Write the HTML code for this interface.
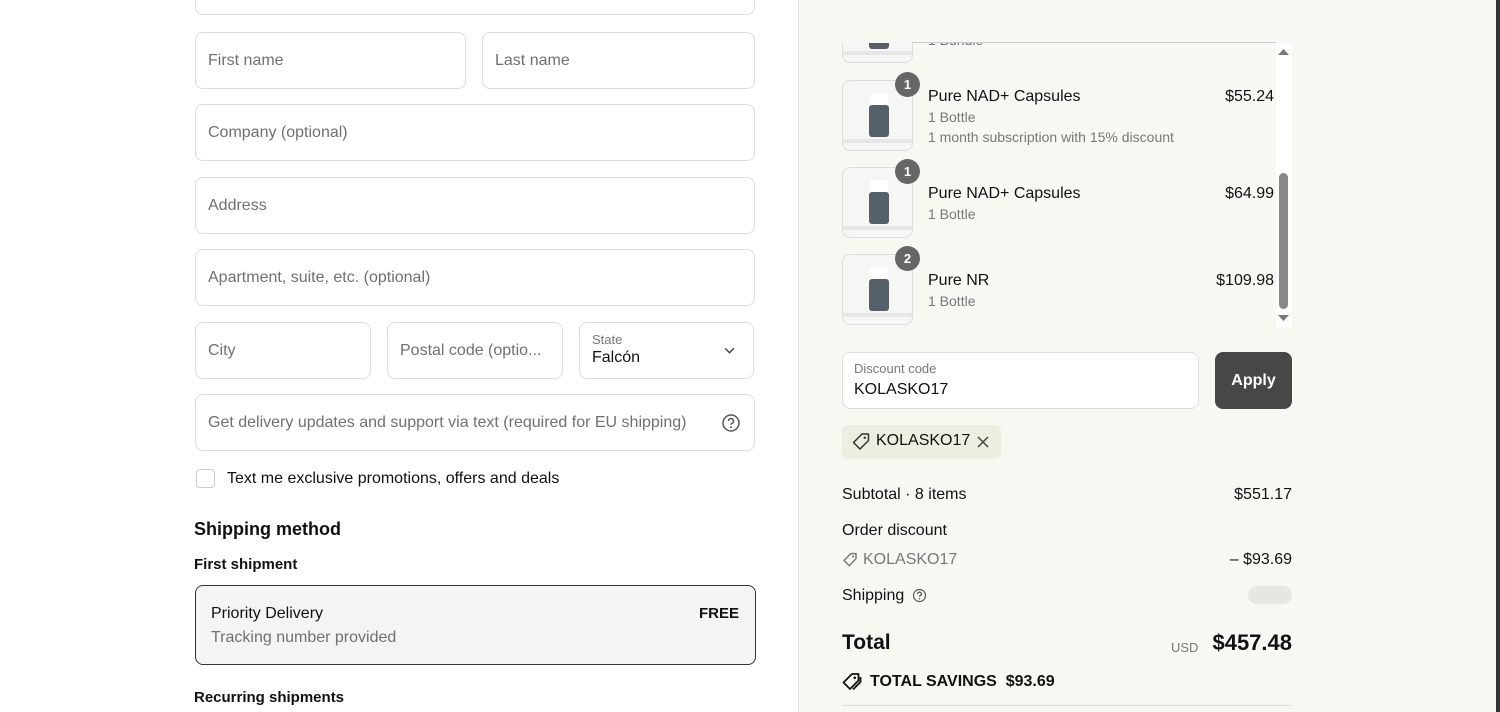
<!DOCTYPE html><html><head><style>
*{box-sizing:border-box;margin:0;padding:0}
body{width:1500px;height:712px;overflow:hidden;font-family:"Liberation Sans",sans-serif;background:#fff;position:relative;color:#111}
.a{position:absolute}
.in{position:absolute;border:1px solid #dcdcdc;border-radius:8px;background:#fff;height:57px;font-size:16px;color:#707070;padding:0 12px;display:flex;align-items:center}
.r{position:absolute;left:798px;top:0;width:698px;height:712px;background:#f8f8f3;border-left:1px solid #e4e4e0}
.img{position:absolute;left:842px;width:71px;height:71px;border:1px solid #ddd;border-radius:8px;background:#f6f6f5;overflow:hidden}
.img .b{position:absolute;left:26px;top:24px;width:20px;height:32px;background:#56606a;border-radius:3px}
.img .c{position:absolute;left:27px;top:12px;width:18px;height:13px;background:#fff;border-radius:3px}
.img .f{position:absolute;left:0;top:58px;width:71px;height:4px;background:#e6e6e6}
.bd{position:absolute;left:895px;width:25px;height:25px;border-radius:50%;background:#666;color:#fff;font-size:13px;font-weight:bold;text-align:center;line-height:25px}
.t{position:absolute;left:928px;font-size:16px;color:#111}
.s{position:absolute;left:928px;font-size:14px;color:#777}
.p{position:absolute;right:226px;font-size:16px}
</style></head><body>
<div class="in" style="left:195px;top:-42px;width:560px"></div>
<div class="a" style="left:208px;top:-13px;font-size:16px">Venezuela</div>
<div class="in" style="left:195px;top:32px;width:271px">First name</div>
<div class="in" style="left:482px;top:32px;width:273px">Last name</div>
<div class="in" style="left:195px;top:104px;width:560px">Company (optional)</div>
<div class="in" style="left:195px;top:177px;width:560px">Address</div>
<div class="in" style="left:195px;top:249px;width:560px">Apartment, suite, etc. (optional)</div>
<div class="in" style="left:195px;top:322px;width:176px">City</div>
<div class="in" style="left:387px;top:322px;width:176px">Postal code (optio...</div>
<div class="in" style="left:579px;top:322px;width:175px;display:block;padding-top:9px"><div style="font-size:13px;color:#777">State</div><div style="color:#111;font-size:16px;margin-top:2px">Falcón</div>
<svg class="a" style="right:18px;top:24px" width="11" height="7" viewBox="0 0 12 8"><path d="M1 1.5l5 5 5-5" fill="none" stroke="#333" stroke-width="1.5"/></svg></div>
<div class="in" style="left:195px;top:394px;width:560px">Get delivery updates and support via text (required for EU shipping)
<svg class="a" style="right:13px;top:18px" width="20" height="20" viewBox="0 0 20 20"><circle cx="10" cy="10" r="8" fill="none" stroke="#555" stroke-width="1.5"/><path d="M7.5 8a2.5 2.5 0 1 1 3.5 2.3c-.7.3-1 .8-1 1.5" fill="none" stroke="#555" stroke-width="1.5"/><circle cx="10" cy="14.3" r="1" fill="#555"/></svg></div>
<div class="a" style="left:196px;top:469px;width:19px;height:19px;border:1px solid #ccc;border-radius:4px;background:#fff"></div>
<div class="a" style="left:227px;top:470px;font-size:16px">Text me exclusive promotions, offers and deals</div>
<div class="a" style="left:194px;top:519px;font-size:18px;font-weight:bold">Shipping method</div>
<div class="a" style="left:194px;top:556px;font-size:15px;font-weight:bold">First shipment</div>
<div class="a" style="left:195px;top:585px;width:561px;height:80px;border:1px solid #333;border-radius:8px;background:#f4f4f4"></div>
<div class="a" style="left:211px;top:605px;font-size:16px">Priority Delivery</div>
<div class="a" style="left:211px;top:629px;font-size:16px;color:#707070">Tracking number provided</div>
<div class="a" style="left:699px;top:605px;font-size:15px;font-weight:bold">FREE</div>
<div class="a" style="left:194px;top:689px;font-size:15px;font-weight:bold">Recurring shipments</div>

<div class="r"></div>
<div class="a" style="left:1496px;top:0;width:4px;height:712px;background:#333"></div>
<div class="a" style="left:1276px;top:43px;width:16px;height:284px;background:#fff"></div>
<div class="img" style="top:-8px;clip-path:inset(51px 0 0 0)"><div class="c"></div><div class="b"></div><div class="f"></div></div>
<div class="s" style="top:32px;clip-path:inset(11px 0 0 0)">1 Bundle</div>
<div class="a" style="left:912px;top:42px;width:364px;height:1px;background:#ccc"></div>
<div class="img" style="top:80px"><div class="c"></div><div class="b"></div><div class="f"></div></div><div class="bd" style="top:72px">1</div>
<div class="t" style="top:88px">Pure NAD+ Capsules</div><div class="s" style="top:109px">1 Bottle</div><div class="s" style="top:129px">1 month subscription with 15% discount</div><div class="p" style="top:88px">$55.24</div>
<div class="img" style="top:167px"><div class="c"></div><div class="b"></div><div class="f"></div></div><div class="bd" style="top:159px">1</div>
<div class="t" style="top:185px">Pure NAD+ Capsules</div><div class="s" style="top:206px">1 Bottle</div><div class="p" style="top:185px">$64.99</div>
<div class="img" style="top:254px"><div class="c"></div><div class="b"></div><div class="f"></div></div><div class="bd" style="top:246px">2</div>
<div class="t" style="top:272px">Pure NR</div><div class="s" style="top:293px">1 Bottle</div><div class="p" style="top:272px">$109.98</div>
<svg class="a" style="left:1278px;top:48px" width="11" height="7"><path d="M0 7L5.5 1 11 7z" fill="#777"/></svg>
<svg class="a" style="left:1278px;top:315px" width="11" height="7"><path d="M0 0L5.5 6 11 0z" fill="#777"/></svg>
<div class="a" style="left:1279px;top:173px;width:9px;height:136px;border-radius:5px;background:#888"></div>

<div class="a" style="left:842px;top:352px;width:357px;height:57px;border:1px solid #ddd;border-radius:8px;background:#fff"></div>
<div class="a" style="left:854px;top:361px;font-size:13px;color:#777">Discount code</div>
<div class="a" style="left:854px;top:381px;font-size:16px">KOLASKO17</div>
<div class="a" style="left:1215px;top:352px;width:77px;height:57px;border-radius:8px;background:#474747;color:#fff;font-weight:bold;font-size:16px;text-align:center;line-height:57px">Apply</div>
<div class="a" style="left:842px;top:425px;width:159px;height:34px;border-radius:6px;background:#ebeee0"></div>
<svg class="a" style="left:851px;top:432px" width="20" height="20" viewBox="0 0 20 20"><path d="M11 2h6.5v6.5L9 17 2.5 10.5z" fill="none" stroke="#333" stroke-width="1.5" stroke-linejoin="round"/><circle cx="13.8" cy="5.8" r="1.2" fill="#333"/></svg>
<div class="a" style="left:876px;top:432px;font-size:16px">KOLASKO17</div>
<svg class="a" style="left:977px;top:436px" width="12" height="12"><path d="M1 1l10 10M11 1L1 11" stroke="#444" stroke-width="1.5"/></svg>
<div class="a" style="left:842px;top:486px;font-size:16px">Subtotal · 8 items</div>
<div class="a" style="right:208px;top:486px;font-size:16px">$551.17</div>
<div class="a" style="left:842px;top:522px;font-size:16px">Order discount</div>
<svg class="a" style="left:842px;top:552px" width="16" height="16" viewBox="0 0 20 20"><path d="M11 2h6.5v6.5L9 17 2.5 10.5z" fill="none" stroke="#777" stroke-width="1.8" stroke-linejoin="round"/><circle cx="13.8" cy="5.8" r="1.3" fill="#777"/></svg>
<div class="a" style="left:863px;top:551px;font-size:16px;color:#777">KOLASKO17</div>
<div class="a" style="right:208px;top:551px;font-size:16px">– $93.69</div>
<div class="a" style="left:842px;top:587px;font-size:16px">Shipping</div>
<svg class="a" style="left:912px;top:588px" width="15" height="15" viewBox="0 0 20 20"><circle cx="10" cy="10" r="8" fill="none" stroke="#555" stroke-width="1.6"/><path d="M7.5 8a2.5 2.5 0 1 1 3.5 2.3c-.7.3-1 .8-1 1.5" fill="none" stroke="#555" stroke-width="1.6"/><circle cx="10" cy="14.3" r="1" fill="#555"/></svg>
<div class="a" style="left:1248px;top:586px;width:44px;height:18px;border-radius:9px;background:#e6e6e3"></div>
<div class="a" style="left:842px;top:631px;font-size:21px;font-weight:bold">Total</div>
<div class="a" style="left:1171px;top:640px;font-size:13px;color:#777">USD</div>
<div class="a" style="right:208px;top:630px;font-size:22px;font-weight:bold">$457.48</div>
<svg class="a" style="left:842px;top:672px" width="20" height="20" viewBox="0 0 20 20"><path d="M10 2h6.5v6.5L8 17 1.5 10.5z" fill="none" stroke="#111" stroke-width="1.8" stroke-linejoin="round"/><path d="M18.5 5v5L11 17.5" fill="none" stroke="#111" stroke-width="1.8"/><circle cx="12.8" cy="5.8" r="1.3" fill="#111"/></svg>
<div class="a" style="left:870px;top:673px;font-size:16px;font-weight:bold">TOTAL SAVINGS&nbsp; $93.69</div>
<div class="a" style="left:842px;top:705px;width:450px;height:1px;background:#ddd"></div>
</body></html>
